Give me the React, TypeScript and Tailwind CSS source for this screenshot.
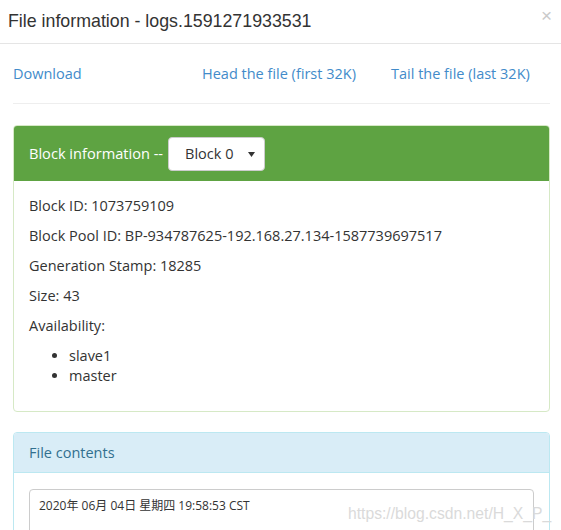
import React from "react";

const body = { fontFamily: '"Open Sans", "Noto Sans CJK SC", sans-serif' };

export default function App(): JSX.Element {
  const replicas = ["slave1", "master"];

  return (
    <div className="relative w-[561px] h-[530px] overflow-hidden bg-white text-[#333]" style={body}>
      {/* modal header */}
      <div className="flex h-[44px] items-center justify-between border-b border-[#e5e5e5] pl-2 pr-2">
        <h4 className="text-[17.8px] leading-none text-[#333] font-['Liberation_Sans',sans-serif]">
          File information - logs.1591271933531
        </h4>
        <button className="mb-[12px] mr-[1px] text-[19px] leading-none text-[#cacaca] font-['Liberation_Sans',sans-serif]">
          ×
        </button>
      </div>

      <div className="px-[13px] pr-[11px]">
        {/* links */}
        <div className="grid h-[60px] grid-cols-[189px_189px_1fr] items-center border-b border-[#eeeeee] text-[14.5px] text-[#428bca]">
          <a href="#">Download</a>
          <a href="#">Head the file (first 32K)</a>
          <a href="#">Tail the file (last 32K)</a>
        </div>

        {/* block panel */}
        <div className="mt-[21px] rounded-[4px] border border-[#d6e9c6]">
          <div className="flex h-[55px] items-center rounded-t-[3px] bg-[#5ea342] px-[15px] text-[14.6px] text-white">
            <span>Block information --</span>
            <div className="ml-[5px] flex h-[34px] w-[97px] items-center justify-between rounded-[4px] border border-[#ccc] bg-white pl-[16px] pr-[9px] text-[14.5px] text-[#333]">
              <span>Block 0</span>
              <svg width="7" height="5" viewBox="0 0 7 5" className="mt-[1px]">
                <path d="M0 0h7L3.5 5z" fill="#333" />
              </svg>
            </div>
          </div>
          <div className="px-[15px] pb-[15px] pt-[15px] text-[14.5px] leading-[20px]">
            <p className="mb-[10px]">Block ID: 1073759109</p>
            <p className="mb-[10px]">Block Pool ID: BP-934787625-192.168.27.134-1587739697517</p>
            <p className="mb-[10px]">Generation Stamp: 18285</p>
            <p className="mb-[10px]">Size: 43</p>
            <p className="mb-[10px]">Availability:</p>
            <ul className="mb-[10px] list-disc pl-[40px]">
              {replicas.map((r) => (
                <li key={r}>{r}</li>
              ))}
            </ul>
          </div>
        </div>

        {/* file contents panel */}
        <div className="mt-[20px] rounded-[4px] border border-[#bce8f1]">
          <div className="flex h-[40px] items-center rounded-t-[3px] border-b border-[#bce8f1] bg-[#d9edf7] px-[15px] text-[14.5px] text-[#31708f]">
            File contents
          </div>
          <div className="px-[15px] pt-[16px]">
            <div className="h-[120px] rounded-[4px] border border-[#ccc] px-[9px] pt-[7px] text-[12px] leading-[18px] text-[#333]">
              2020年 06月 04日 星期四 19:58:53 CST
            </div>
          </div>
        </div>
      </div>

      {/* watermark */}
      <div className="absolute left-[348px] top-[502px] text-[15.7px] text-[#dadada] font-['Liberation_Sans',sans-serif]">
        https://blog.csdn.net/H_X_P_
      </div>
    </div>
  );
}
